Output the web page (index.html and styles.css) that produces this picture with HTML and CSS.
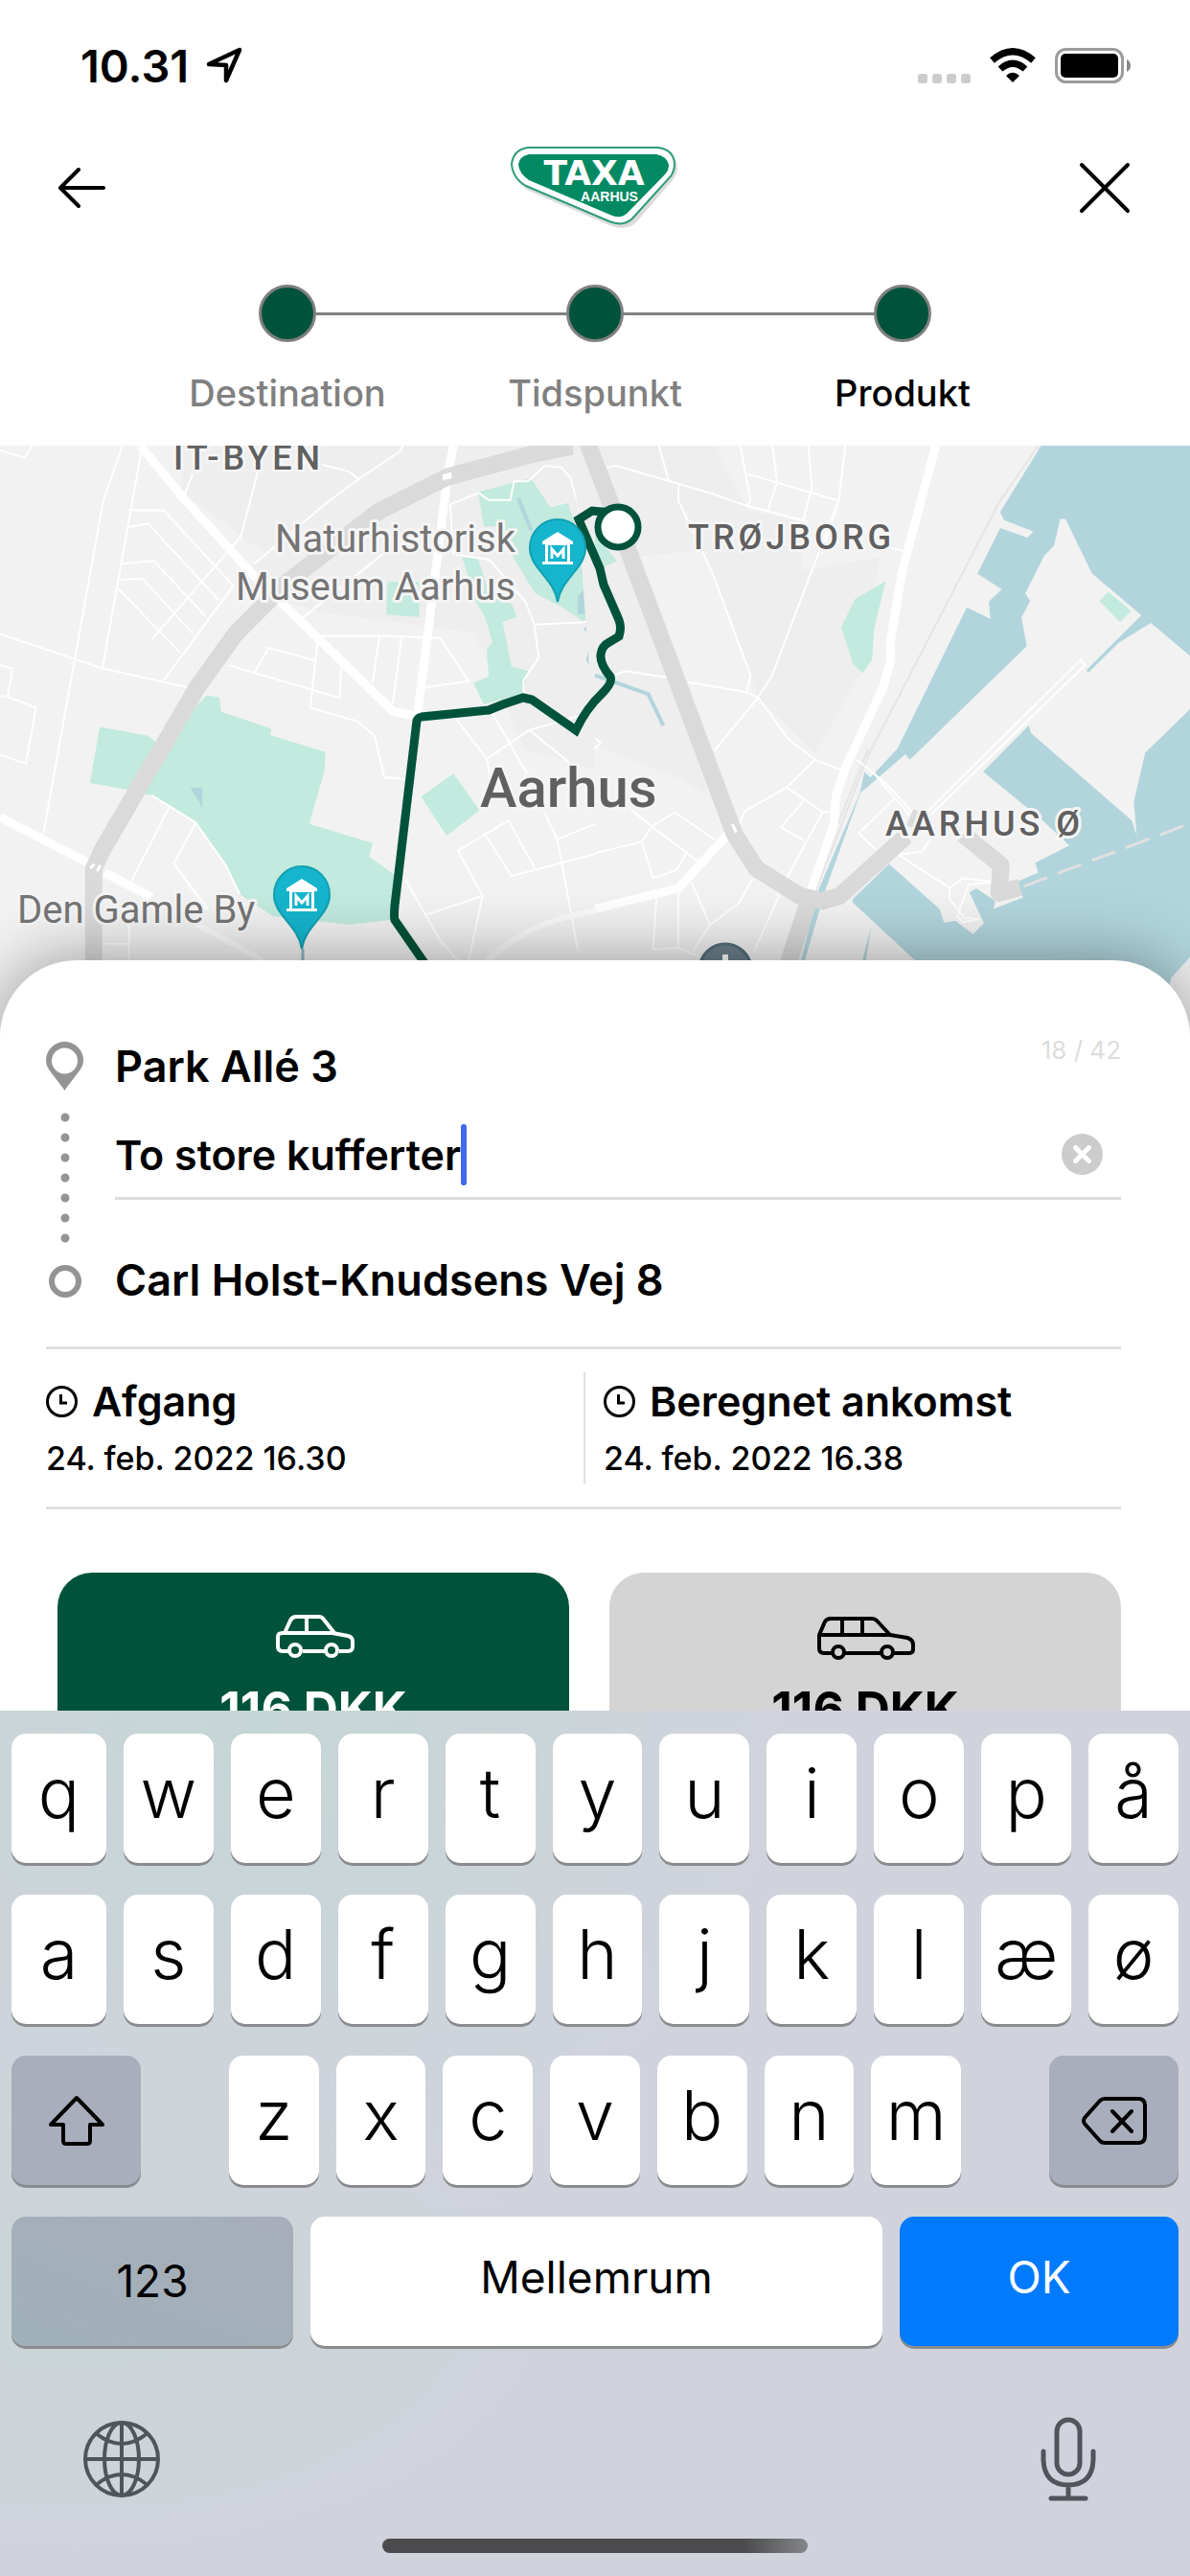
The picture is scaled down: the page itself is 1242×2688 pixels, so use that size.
FILE: index.html
```html
<!DOCTYPE html>
<html lang="da">
<head>
  <meta charset="UTF-8">
  <meta name="viewport" content="width=device-width, initial-scale=1.0">
  <title>Taxa Aarhus</title>
  <link rel="stylesheet" href="styles.css">
</head>
<body>
<div class="app">

  <div class="status-bar">
    <span class="clock">10.31</span>
    <svg class="location" width="38" height="38" viewBox="0 0 38 38"><path d="M3 18 35 3 21 35V19Z" fill="none" stroke="#000" stroke-width="4.500" stroke-linejoin="round"/></svg>
    <div class="status-icons">
      <svg width="55" height="10" viewBox="0 0 55 10" class="cell"><g fill="#ccc"><rect width="10" height="10" rx="3"/><rect x="15" width="10" height="10" rx="3"/><rect x="30" width="10" height="10" rx="3"/><rect x="45" width="10" height="10" rx="3"/></g></svg>
      <svg width="48" height="36" viewBox="0 0 48 36"><path d="M24 36 17 29Q24 22.500 31 29Z"/><g fill="none" stroke="#000" stroke-width="7"><path d="M11 22Q24 10.500 37 22"/><path d="M2.500 13Q24-5.500 45.500 13"/></g></svg>
      <svg width="79" height="37" viewBox="0 0 79 37"><rect x="1.500" y="1.500" width="69" height="34" rx="10" fill="none" stroke="#9b9b9b" stroke-width="3"/><rect x="6" y="6" width="60" height="25" rx="5"/><path d="M75 12Q79 14 79 18.500T75 25Z" fill="#888"/></svg>
    </div>
  </div>

  <header class="top-bar">
    <button class="icon-button" aria-label="Tilbage">
      <svg width="50" height="42" viewBox="0 0 50 42"><path d="M48 21H3M22 2 3 21 22 40" fill="none" stroke="#000" stroke-width="4" stroke-linecap="round" stroke-linejoin="round"/></svg>
    </button>
    <svg class="logo" width="178" height="90" viewBox="-4 -2 178 90" role="img" aria-label="Taxa Aarhus">
      <path d="M20 5H157Q174 7 174 22 174 29 169 35L131 79Q120 89 103 82L19 46Q4 37 3 22 4 7 20 5Z" fill="#dcdcdc"/>
      <path d="M18 1H154Q170 3 171 18 171 25 167 31L127 75Q118 84 103 78L16 41Q2 33 1 18 3 3 18 1Z" fill="#fff" stroke="#2d9c78" stroke-width="2"/>
      <path d="M19 8H152Q163 10 165 19 165 25 161 29L123 68Q116 76 106 72L19 35Q9 28 8 19 9 10 19 8Z" fill="#038a63"/>
      <text x="87" y="40" class="logo-main">TAXA</text>
      <text x="103" y="57" class="logo-sub">AARHUS</text>
    </svg>
    <button class="icon-button" aria-label="Luk">
      <svg width="54" height="54" viewBox="0 0 54 54"><path d="M3 3 51 51M51 3 3 51" fill="none" stroke="#000" stroke-width="4" stroke-linecap="round"/></svg>
    </button>
  </header>

  <ol class="stepper">
    <li class="step"><span class="step-dot"></span>Destination</li>
    <li class="step"><span class="step-dot"></span>Tidspunkt</li>
    <li class="step active"><span class="step-dot"></span>Produkt</li>
  </ol>

  <div class="map">
    <svg class="map-canvas" viewBox="0 0 1242 605" preserveAspectRatio="xMidYMin slice">
      <rect width="1242" height="605" fill="#f2f2f2"/>
      <!-- west side -->
      <g transform="translate(0 -5) scale(.396 .357)">
        <path class="town" d="M480 0H1568V960L1380 900 1250 560 840 500 620 420 700 330 480 150Z"/>
        <path class="park" d="M1260 150 1390 112 1405 118 1450 195 1497 182 1520 260 1650 340 1700 480 1540 530 1480 485 1410 445 1355 345 1330 250 1275 250Z"/>
        <path class="park" d="M1218 340 1260 345 1285 430 1350 480 1363 515 1325 530 1348 660 1392 672 1378 740 1275 770 1248 708 1288 688 1283 610 1298 588 1280 520 1255 470Z"/>
        <path class="park" d="M1022 412H1105L1105 515 1018 508Z"/>
        <path class="park" d="M263 836 390 862 420 888 545 744 578 750 583 792 716 842 712 860 858 910 855 965 815 1120 982 1176 973 1215 1042 1270 1032 1400 920 1414 720 1390 632 1325 595 1240 515 1115 400 1036 340 1020 237 1000Z"/>
        <path class="park" d="M1195 973 1110 1040 1177 1154 1264 1080Z"/>
        <path class="water" d="M502 1014H533V1072ZM1552 415 1600 480 1568 500 1523 508V455ZM1530 385 1548 345 1600 370V410Z"/>
        <path class="stream" d="M1366 167 1400 262M1542 546 1563 572 1550 640 1580 690"/>
        <path class="street" d="M0 28 65 50 85 14M323 14 272 175 115 1145M375 14 270 665M0 565 270 665 500 722M340 203H432L615 424 428 705M335 253 390 242 578 467M318 360 405 350 541 512M312 407 375 402 507 562M312 432 475 620M0 655 33 667 20 748 95 780 68 943 0 918M0 745 20 748M508 95 480 175M682 80 635 280 400 580M1062 14 1055 30 945 112 862 180 670 360M795 520 1010 330M850 70 920 90 945 112M845 570H1000L1160 576 1236 702 1118 721M1000 572 982 705M1058 576 1035 770M600 655 895 751 900 650M672 675 708 605 830 642M837 585 818 780 942 820 987 862 1013 984 1070 988M1186 186 1262 152 1288 173H1345L1355 118H1392L1436 73 1480 78 1503 108 1525 190M1186 186 1195 330 1290 348 1385 470 1408 537 1420 633 1380 700V740M1408 537 1540 530 1600 500M1200 810 1283 930 1395 845 1500 940M1300 800 1390 975M1283 930 1295 1000M400 1036 515 1115 595 1240 632 1325M445 1072 340 1300M515 1120 458 1235 550 1370M458 1235 545 1370M1340 1110 1207 1198 1272 1330 1123 1385M1340 1110 1410 1250M1275 1145 1348 1272 1568 1208M1435 1085 1468 1165 1480 1230 1523 1490M1468 1165 1568 1120M1272 1330 1235 1518M1395 845 1540 800M1070 1285 1160 1460 1205 1518M270 1470H340M340 1390V1518"/>
        <path class="road" d="M370 14 485 170 670 395 1035 790 1100 806 1180 100 1195 14M0 1100 240 1238M275 1262 400 1335"/>
        <path class="lane" d="M500 1400 690 1518M1285 1518Q1400 1400 1568 1375"/>
        <path class="highway" d="M247 1700V1250L270 1195 520 720 620 565 750 420 900 290 1000 205 1180 105 1400 40 1560 5"/>
        <path class="crossing" d="M1166 103 1190 96M1166 112 1190 105M238 1250 248 1237M256 1258 265 1240"/>
      </g>
      <!-- harbour and east side -->
      <g transform="translate(621 -5) scale(.396 .357)">
        <path class="town" d="M-60 0 310 0 400 200 550 240 540 495 320 425 280 320 100 340 300 1040 230 990 0 890ZM320 425 750 340 700 680 580 915 430 750Z"/>
        <path class="water" d="M1178 10 1068 208 1078 232 1155 265 1140 283 1068 255 1008 388 1072 434 1038 470 1042 520 980 487 797 900 726 984 710 968 698 1030 590 1310 543 1518 553 1518 608 1310 700 1028 743 988 818 916 830 932 1138 600 1124 516 1147 468 1134 446 1184 336 1210 306 1226 228H1240L1310 388 1440 510 1295 670 1300 678 1380 590 1465 532 1568 628 1600 660V10Z"/>
        <path class="water" d="M1600 750 1450 912 1420 1055 1428 1155 1415 1110 1150 855 1143 832 1023 967 1180 1110 1250 1183 1160 1233 1168 1262 1110 1290 1128 1335 1050 1368 1055 1345 1005 1308 987 1320 1025 1410 996 1442 950 1403 920 1408 908 1368 775 1237 678 1340 680 1350 1020 1700H1480L1520 1568 1600 1470ZM728 1420 705 1518H714Z"/>
        <path class="park" d="M766 410 685 463 649 544 680 652 705 679 730 640 736 548ZM1353 441 1329 468 1384 530 1413 497Z"/>
        <path class="park" d="M0 270 58 352 20 370 0 330Z"/>
        <path class="stream" d="M0 685 140 740 180 832"/>
        <path class="rail" d="M1168 14 1065 180 720 920 580 1320M720 900 640 1120"/>
        <path class="street" d="M32 78 55 72 310 155 400 190 560 236M168 14 195 118M220 128V175L310 388 410 685 400 735M383 14 410 175 400 190M468 14 480 120 455 205M562 14 572 135 548 235M660 14 642 175 465 690 430 750M400 96 642 175M598 330 642 175M775 312 820 324M245 705 400 735 430 750 512 875 580 932 655 965M430 750 315 905M80 673 190 692M40 690 80 673M580 932 505 1013 395 1082 380 1120M505 1013 600 1085H630M550 1052 490 1130 550 1168M600 1085 480 1330M690 932 770 1005 840 1090M735 970 760 1005 830 1095M0 1205 123 1172 150 1127 210 1086 315 1165M95 1078 150 1127 275 1232M123 1172 153 1278 215 1255 240 1205M255 1290 303 1415 380 1350 415 1280M162 1335 153 1487 220 1482 270 1505M220 1310V1482M303 1415 258 1492M485 1330 420 1490M790 1045 695 1147 740 1195M800 1210 935 1307V1340L975 1395 1012 1398M800 1210 862 1200 885 1165M935 1307 970 1278 1055 1290 985 1297 955 1388 970 1407 1010 1398M0 870 15 882 0 900M875 1085 1280 640 1292 655 885 1093"/>
        <path class="road" d="M898 14 810 380 778 590 780 640 760 720 660 955 635 1040 630 1120 568 1318M0 1368 220 1308 350 1150"/>
        <path class="highway" d="M-22 0 30 150 368 1150 425 1250 540 1330 600 1345 645 1330 820 1155M565 1340 500 1560M830 1100 850 1110M970 1150 1070 1240 1065 1322 1120 1305"/>
        <path class="crossing" d="M362 1120 372 1145"/>
        <path class="ferry" d="M1130 1302 1600 1105"/>
      </g>
      <path class="route" d="M446 544 412 495Q411 492 412 480L435 287Q436 284 440 283L510 276 525 270 546 263 555 265 601 297Q612 274 628 259 640 247 637 241 626 228 627 218 628 209 636 205L646 199Q649 190 646 182L630 145 626 128 604 77 618 68 640 70"/>
      <circle cx="645" cy="85" r="21" fill="#fff" stroke="#00533a" stroke-width="7"/>
      <g id="museum-pin">
        <path d="M582 77C566 77 553 90 553 107 553 128 578 138 582 163 586 138 611 128 611 107 611 90 598 77 582 77Z" fill="#15b5cd" stroke="#149fb1" stroke-width="2"/>
        <path d="M582 90 566 100V103H569V121H566V124H598V121H595V103H598V100ZM572 104H592V121H572Z" fill="#fff" fill-rule="evenodd"/>
        <path d="M576 118V108L582 115 588 108V118" fill="none" stroke="#fff" stroke-width="3"/>
      </g>
      <use href="#museum-pin" x="-267" y="362"/>
      <path d="M316 525V540" stroke="#8fb9c2" stroke-width="3"/>
      <g>
        <circle cx="757" cy="547" r="27" fill="#6c808c" stroke="#536f7a" stroke-width="3"/>
        <path d="M757 531V550" stroke="#fff" stroke-width="6"/>
      </g>
      <g class="map-label poi">
        <text x="538" y="111" text-anchor="end">Naturhistorisk</text>
        <text x="538" y="161" text-anchor="end">Museum Aarhus</text>
        <text x="18" y="498">Den Gamle By</text>
      </g>
      <g class="map-label district">
        <text x="181" y="25">IT-BYEN</text>
        <text x="718" y="108">TRØJBORG</text>
        <text x="924" y="407">AARHUS Ø</text>
      </g>
      <text x="501" y="377" class="map-label city">Aarhus</text>
    </svg>
  </div>

  <main class="sheet">
    <section class="trip">
      <div class="trip-line">
        <svg width="39" height="51" viewBox="0 0 39 51"><path d="M19.500 0A19.500 19.500 0 0 0 0 19.500C0 29 9 35 19.500 51 30 35 39 29 39 19.500A19.500 19.500 0 0 0 19.500 0ZM19.500 6.500A13.500 13.500 0 1 1 19.500 33.500 13.500 13.500 0 1 1 19.500 6.500Z" fill="#949494" fill-rule="evenodd"/></svg>
        <svg width="10" height="136" viewBox="0 0 10 136"><path d="M5 5V132" stroke="#949494" stroke-width="9" stroke-linecap="round" stroke-dasharray="0 21"/></svg>
        <svg width="34" height="34" viewBox="0 0 34 34"><circle cx="17" cy="17" r="14" fill="none" stroke="#949494" stroke-width="6"/></svg>
      </div>
      <div class="trip-stops">
        <div class="stop">
          <label for="note">Park Allé 3</label>
          <span class="counter">18 / 42</span>
        </div>
        <div class="note">
          <input id="note" class="note-input" type="text" value="To store kufferter" maxlength="42" size="16">
          <span class="caret"></span>
          <button class="clear" aria-label="Ryd">
            <svg width="43" height="43" viewBox="0 0 43 43"><circle cx="21.500" cy="21.500" r="21.500" fill="#ccc"/><path d="M14.500 14.500 28.500 28.500M28.500 14.500 14.500 28.500" stroke="#fff" stroke-width="5" stroke-linecap="round"/></svg>
          </button>
        </div>
        <div class="stop">Carl Holst-Knudsens Vej 8</div>
      </div>
    </section>

    <section class="times">
      <div class="time">
        <h2><svg width="33" height="33" viewBox="0 0 33 33"><circle cx="16.500" cy="16.500" r="15" fill="none" stroke="#000" stroke-width="3"/><path d="M15.500 9V18H22" fill="none" stroke="#000" stroke-width="3"/></svg>Afgang</h2>
        <p>24. feb. 2022 16.30</p>
      </div>
      <div class="time">
        <h2><svg width="33" height="33" viewBox="0 0 33 33"><circle cx="16.500" cy="16.500" r="15" fill="none" stroke="#000" stroke-width="3"/><path d="M15.500 9V18H22" fill="none" stroke="#000" stroke-width="3"/></svg>Beregnet ankomst</h2>
        <p>24. feb. 2022 16.38</p>
      </div>
    </section>

    <section class="products">
      <button class="product selected">
        <svg width="104" height="50" viewBox="-2 0 104 50"><g fill="none" stroke="currentColor" stroke-width="4" stroke-linejoin="round"><path d="M24 40H18Q13 40 13 35V25Q13 21 18 21H70L86 24Q91 25 91 30V35Q91 40 86 40H77M39 40H62"/><path d="M20 21 26 8Q28 4 32 4H56Q59 4 61 7L72 21M43 4V21"/><circle cx="31" cy="39" r="6"/><circle cx="69" cy="39" r="6"/></g></svg>
        <span>116 DKK</span>
      </button>
      <button class="product">
        <svg width="104" height="50" viewBox="-1 0 104 50"><g fill="none" stroke="currentColor" stroke-width="4" stroke-linejoin="round"><path d="M16 42H8Q3 42 3 37V23L9 9Q11 6 15 6H58Q61 6 63 8L77 23 95 26Q101 28 101 33V38Q101 42 96 42H81M30 42H67"/><path d="M3 23H77M27 6V23M48 6V23"/><circle cx="23" cy="41" r="6"/><circle cx="74" cy="41" r="6"/></g></svg>
        <span>116 DKK</span>
      </button>
    </section>
  </main>

  <div class="keyboard">
    <div class="key-row letters">
      <button class="key">q</button><button class="key">w</button><button class="key">e</button><button class="key">r</button><button class="key">t</button><button class="key">y</button><button class="key">u</button><button class="key">i</button><button class="key">o</button><button class="key">p</button><button class="key">å</button>
    </div>
    <div class="key-row letters">
      <button class="key">a</button><button class="key">s</button><button class="key">d</button><button class="key">f</button><button class="key">g</button><button class="key">h</button><button class="key">j</button><button class="key">k</button><button class="key">l</button><button class="key">æ</button><button class="key">ø</button>
    </div>
    <div class="key-row third">
      <button class="key dark side" aria-label="Skift">
        <svg width="60" height="54" viewBox="0 0 60 54"><path d="M30 3 57 31H44V48Q44 51 41 51H19Q16 51 16 48V31H3Z" fill="none" stroke="#000" stroke-width="4" stroke-linejoin="round"/></svg>
      </button>
      <div class="inner-row">
        <button class="key">z</button><button class="key">x</button><button class="key">c</button><button class="key">v</button><button class="key">b</button><button class="key">n</button><button class="key">m</button>
      </div>
      <button class="key dark side" aria-label="Slet">
        <svg width="70" height="52" viewBox="0 0 70 52"><path d="M25 3H60Q67 3 67 10V42Q67 49 60 49H25Q22 49 20 47L4 29Q2 26 4 23L20 5Q22 3 25 3ZM33 16 53 37M53 16 33 37" fill="none" stroke="#000" stroke-width="4" stroke-linecap="round"/></svg>
      </button>
    </div>
    <div class="key-row bottom">
      <button class="key dark">123</button>
      <button class="key">Mellemrum</button>
      <button class="key ok">OK</button>
    </div>
    <div class="key-tools">
      <button class="icon-button" aria-label="Skift tastatur">
        <svg width="82" height="82" viewBox="0 0 82 82"><g fill="none" stroke="#50555c" stroke-width="4"><circle cx="41" cy="41" r="38"/><ellipse cx="41" cy="41" rx="18" ry="38"/><path d="M41 3V79M3 41H79M14 14Q41 36 68 14M14 68Q41 46 68 68"/></g></svg>
      </button>
      <button class="icon-button" aria-label="Diktering">
        <svg width="58" height="88" viewBox="0 0 58 88"><g fill="none" stroke="#50555c" stroke-width="5" stroke-linecap="round"><rect x="17" y="3" width="24" height="57" rx="12"/><path d="M3 36V45Q4 71 29 71 54 71 55 45V36M29 71V85M11 85H47"/></g></svg>
      </button>
    </div>
    <div class="home-indicator"></div>
  </div>

</div>
</body>
</html>
```
FILE: styles.css
```css
* {
  box-sizing: border-box;
}

body {
  margin: 0;
  background: #fff;
  color: #000;
  font-family: Inter, "Liberation Sans", sans-serif;
}

button {
  margin: 0;
  padding: 0;
  border: none;
  background: none;
  color: inherit;
  font: inherit;
  cursor: pointer;
}

svg {
  display: block;
  flex: none;
}

.app {
  display: flex;
  flex-direction: column;
  height: 100vh;
  overflow: hidden;
}

/* Status bar */
.status-bar {
  display: flex;
  align-items: center;
  flex: none;
  height: 136px;
  padding: 0 62px 0 84px;
}

.clock {
  font-size: 47px;
  font-weight: 600;
}

.location {
  margin-left: 18px;
}

.status-icons {
  display: flex;
  align-items: center;
  gap: 20px;
  margin-left: auto;
}

.cell {
  align-self: flex-end;
}

/* Header */
.top-bar {
  display: flex;
  align-items: center;
  justify-content: space-between;
  flex: none;
  height: 120px;
  padding: 0 62px 0 60px;
}

.logo-main {
  font: bold 36px "DejaVu Sans", sans-serif;
  fill: #fff;
  text-anchor: middle;
}

.logo-sub {
  font: bold 14px "Liberation Sans", sans-serif;
  fill: #fff;
  text-anchor: middle;
}

.stepper {
  display: grid;
  grid-template-columns: repeat(3, 1fr);
  flex: none;
  width: 100%;
  max-width: 963px;
  height: 209px;
  margin: 0 auto;
  padding: 41px 0 0;
  list-style: none;
}

.step {
  position: relative;
  display: flex;
  flex-direction: column;
  align-items: center;
  gap: 31px;
  color: #808080;
  font-size: 38px;
  font-weight: 500;
  line-height: 44px;
}

.step + .step::before {
  content: "";
  position: absolute;
  top: 29px;
  right: 50%;
  width: 100%;
  height: 3px;
  background: #808080;
}

.step-dot {
  position: relative;
  z-index: 1;
  width: 60px;
  height: 60px;
  border: 3px solid #808080;
  border-radius: 50%;
  background: #00533a;
}

.step.active {
  color: #000;
}

/* Map */
.map {
  flex: none;
  height: 605px;
}

.map-canvas {
  width: 100%;
  height: 100%;
}

.town {
  fill: #eee;
}

.park {
  fill: #c2eade;
}

.water {
  fill: #b2d5dd;
}

.stream,
.street,
.road,
.lane,
.highway,
.crossing,
.rail,
.ferry {
  fill: none;
  vector-effect: non-scaling-stroke;
}

.stream {
  stroke: #b2d5dd;
  stroke-width: 4;
}

.street {
  stroke: #fff;
  stroke-width: 2;
}

.road {
  stroke: #fff;
  stroke-width: 9;
}

.lane {
  stroke: #fafafa;
  stroke-width: 6;
}

.highway {
  stroke: #dadada;
  stroke-width: 18;
  stroke-linejoin: round;
}

.crossing {
  stroke: #fff;
  stroke-width: 3;
}

.rail {
  stroke: #e4e4e4;
  stroke-width: 2;
}

.ferry {
  stroke: #e0e0e0;
  stroke-width: 3;
  stroke-dasharray: 26 12;
}

.route {
  fill: none;
  stroke: #00533a;
  stroke-width: 9;
}

.map-label {
  font-family: Roboto, sans-serif;
  paint-order: stroke;
  stroke: #f5f5f5;
  stroke-width: 6;
  stroke-linejoin: round;
}

.poi {
  font-size: 40px;
  fill: #757575;
}

.district {
  font-size: 36px;
  font-weight: 500;
  fill: #606060;
  letter-spacing: 4px;
}

.city {
  font-size: 58px;
  font-weight: 500;
  fill: #606060;
}

/* Trip sheet */
.sheet {
  position: relative;
  flex: 1 1 0;
  min-height: 0;
  overflow: hidden;
  margin-top: -68px;
  padding: 78px 72px 0 48px;
  border-radius: 80px 80px 0 0;
  background: #fff;
  box-shadow: 0 0 70px rgba(0, 0, 0, .4);
}

.trip {
  display: flex;
  gap: 33px;
  padding-bottom: 36px;
  border-bottom: 3px solid #e0e0e0;
}

.trip-line {
  display: flex;
  flex-direction: column;
  align-items: center;
  gap: 23px;
  padding-top: 7px;
}

.trip-stops {
  flex: 1;
}

.stop {
  display: flex;
  align-items: flex-start;
  justify-content: space-between;
  font-size: 45px;
  font-weight: 600;
  line-height: 66px;
}

.counter {
  color: #ddd;
  font-size: 26px;
  font-weight: 400;
  line-height: 32px;
}

.note {
  display: flex;
  align-items: center;
  height: 92px;
  margin: 14px 0 51px;
  padding-right: 19px;
  border-bottom: 3px solid #dcdcdc;
}

.note-input {
  field-sizing: content;
  padding: 0;
  border: none;
  outline: none;
  background: none;
  color: #000;
  font: 600 43px Inter, sans-serif;
}

.caret {
  width: 6px;
  height: 64px;
  border-radius: 3px;
  background: #4169f0;
}

.clear {
  margin-left: auto;
}

.times {
  display: grid;
  grid-template-columns: 1fr 1fr;
  padding: 24px 0;
  border-bottom: 3px solid #e0e0e0;
}

.time {
  height: 116px;
}

.time + .time {
  padding-left: 19px;
  border-left: 2px solid #e0e0e0;
}

.time h2 {
  display: flex;
  align-items: center;
  gap: 15px;
  margin: 0;
  font-size: 43px;
  font-weight: 600;
  line-height: 60px;
}

.time p {
  margin: 0;
  font-size: 34px;
  font-weight: 500;
  line-height: 60px;
}

.products {
  display: grid;
  grid-template-columns: 1fr 1fr;
  gap: 42px;
  padding: 66px 0 0 12px;
}

.product {
  display: flex;
  flex-direction: column;
  align-items: center;
  gap: 20px;
  height: 300px;
  padding-top: 42px;
  border-radius: 36px;
  background: #d4d4d4;
  font-size: 50px;
  font-weight: 700;
}

.product.selected {
  background: #00533a;
  color: #fff;
}

/* Keyboard */
.keyboard {
  position: relative;
  display: flex;
  flex-direction: column;
  flex: none;
  gap: 33px;
  padding: 24px 12px;
  background:
    radial-gradient(ellipse at 22% 0, #c5d6d6, transparent 40%),
    radial-gradient(ellipse at 6% 68%, #cad5d6, transparent 30%),
    #d0d3dc;
}

.key-row {
  display: grid;
  gap: 18px;
}

.letters {
  grid-template-columns: 99fr repeat(10, 94fr);
}

.third {
  grid-template-columns: 135px 1fr 135px;
  gap: 92px;
}

.inner-row {
  display: grid;
  grid-template-columns: repeat(7, 1fr);
  gap: 18px;
}

.bottom {
  grid-template-columns: 294fr 597fr 291fr;
}

.key {
  display: flex;
  align-items: center;
  justify-content: center;
  min-width: 0;
  height: 135px;
  padding-bottom: 12px;
  border-radius: 15px;
  background: #fff;
  box-shadow: 0 3px 0 #898b8f;
  font-size: 72px;
  font-weight: 300;
}

.bottom .key {
  padding-bottom: 9px;
  font-size: 46px;
  font-weight: 400;
}

.key.dark {
  padding-bottom: 0;
  background: #a8aebb;
}

.key.ok {
  background: #007aff;
  color: #fff;
}

.bottom .key.dark {
  padding-bottom: 2px;
  background: linear-gradient(20deg, #9fb0b8, #a8aebb);
}

.key-tools {
  display: flex;
  align-items: center;
  justify-content: space-between;
  padding: 41px 86px 0 74px;
}

.home-indicator {
  width: 444px;
  height: 15px;
  margin: 6px auto 0;
  border-radius: 8px;
  background: linear-gradient(90deg, #4b4b4d 85%, #85868a);
}
```
